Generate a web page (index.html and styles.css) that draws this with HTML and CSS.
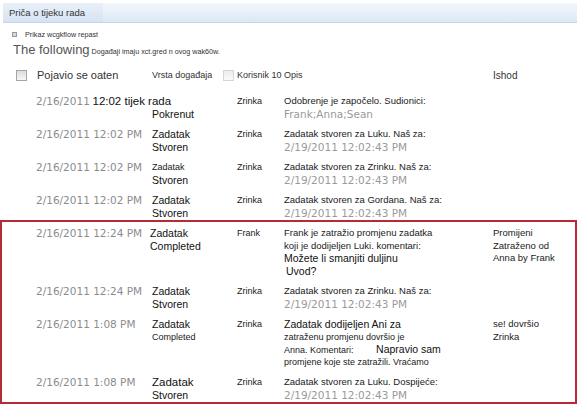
FILE: index.html
```html
<!DOCTYPE html>
<html>
<head>
    <meta charset="utf-8">
    <title>Priča o tijeku rada</title>
    <link rel="stylesheet" href="styles.css">
</head>
<body>
<div class="titlebar"><span class="tab">Priča o tijeku rada</span></div>
<div class="subline"><span class="bullet"></span>Prikaz wcgkflow repast</div>
<div class="intro"><span class="big">The following</span> Događaji imaju xct.gred n ovog wak60w.</div>

<div class="row head">
    <div><span class="check"></span></div>
    <div class="h-date">Pojavio se oaten</div>
    <div class="h-type">Vrsta događaja <span class="check light"></span></div>
    <div>Korisnik 10</div>
    <div>Opis</div>
    <div class="h-out">Ishod</div>
</div>

<div class="row">
    <div class="cell"><div><span class="dt">2/16/2011</span> <span class="xl">12:02 tijek rada</span></div></div>
    <div class="cell"><div></div><div class="lg">Pokrenut</div></div>
    <div class="cell user"><div>Zrinka</div></div>
    <div class="cell"><div>Odobrenje je započelo. Sudionici:</div><div class="dg">Frank;Anna;Sean</div></div>
    <div class="cell"></div>
</div>
<div class="row">
    <div class="cell"><div class="dt">2/16/2011 12:02 PM</div></div>
    <div class="cell"><div class="lg">Zadatak</div><div class="lg">Stvoren</div></div>
    <div class="cell user"><div>Zrinka</div></div>
    <div class="cell"><div>Zadatak stvoren za Luku. Naš za:</div><div class="dg">2/19/2011 12:02:43 PM</div></div>
    <div class="cell"></div>
</div>
<div class="row">
    <div class="cell"><div class="dt">2/16/2011 12:02 PM</div></div>
    <div class="cell"><div class="sm">Zadatak</div><div class="lg">Stvoren</div></div>
    <div class="cell user"><div>Zrinka</div></div>
    <div class="cell"><div>Zadatak stvoren za Zrinku. Naš za:</div><div class="dg">2/19/2011 12:02:43 PM</div></div>
    <div class="cell"></div>
</div>
<div class="row">
    <div class="cell"><div class="dt">2/16/2011 12:02 PM</div></div>
    <div class="cell"><div class="lg">Zadatak</div><div class="lg">Stvoren</div></div>
    <div class="cell user"><div>Zrinka</div></div>
    <div class="cell"><div>Zadatak stvoren za Gordana. Naš za:</div><div class="dg">2/19/2011 12:02:43 PM</div></div>
    <div class="cell"></div>
</div>

<div class="flagged">
    <div class="row">
        <div class="cell"><div class="dt">2/16/2011 12:24 PM</div></div>
        <div class="cell shift"><div class="lg">Zadatak</div><div class="lg">Completed</div></div>
        <div class="cell user"><div>Frank</div></div>
        <div class="cell">
            <div>Frank je zatražio promjenu zadatka</div>
            <div>koji je dodijeljen Luki. komentari:</div>
            <div class="lg">Možete li smanjiti duljinu</div>
            <div class="lg indent">Uvod?</div>
        </div>
        <div class="cell"><div>Promijeni</div><div>Zatraženo od</div><div>Anna by Frank</div></div>
    </div>
    <div class="row">
        <div class="cell"><div class="dt">2/16/2011 12:24 PM</div></div>
        <div class="cell"><div class="lg">Zadatak</div><div class="lg">Stvoren</div></div>
        <div class="cell user"><div>Zrinka</div></div>
        <div class="cell"><div>Zadatak stvoren za Zrinku. Naš za:</div><div class="dg">2/19/2011 12:02:43 PM</div></div>
        <div class="cell"></div>
    </div>
    <div class="row">
        <div class="cell"><div class="dt">2/16/2011 1:08 PM</div></div>
        <div class="cell"><div class="lg">Zadatak</div><div class="sm">Completed</div></div>
        <div class="cell user"><div>Zrinka</div></div>
        <div class="cell">
            <div class="lg">Zadatak dodijeljen Ani za</div>
            <div class="sm">zatraženu promjenu dovršio je</div>
            <div class="sm">Anna. Komentari: <span class="lg gap">Napravio sam</span></div>
            <div class="sm">promjene koje ste zatražili. Vraćamo</div>
        </div>
        <div class="cell"><div>se! dovršio</div><div>Zrinka</div></div>
    </div>
    <div class="row last">
        <div class="cell"><div class="dt">2/16/2011 1:08 PM</div></div>
        <div class="cell"><div class="xl">Zadatak</div><div class="lg">Stvoren</div></div>
        <div class="cell user"><div>Zrinka</div></div>
        <div class="cell"><div>Zadatak stvoren za Luku. Dospijeće:</div><div class="dg">2/19/2011 12:02:43 PM</div></div>
        <div class="cell"></div>
    </div>
</div>
</body>
</html>
```

FILE: styles.css
```css
body {
    margin: 0;
    font-family: "Liberation Sans", Arial, sans-serif;
    color: #1a1a1a;
    background-color: #fff;
}
.titlebar {
    display: flex;
    height: 19px;
    margin: 3px 0 0 3px;
    background: linear-gradient(#f3f7fc, #dce8f6);
    border-bottom: 1px solid #c6d6ea;
}
.tab {
    display: flex;
    align-items: center;
    padding: 0 18px 0 6px;
    font-size: 9.5px;
    color: #333;
    background: linear-gradient(#e9f0f9, #d6e3f3);
}
.subline {
    display: flex;
    align-items: center;
    height: 10px;
    margin: 6px 0 0 12px;
    font-size: 7.2px;
    color: #333;
}
.bullet {
    width: 3px;
    height: 3px;
    margin-right: 8px;
    border: 1px solid #9a9a9a;
    background-color: #d8d8d8;
}
.intro {
    height: 15px;
    line-height: 15px;
    margin: 3px 0 0 13px;
    font-size: 7.2px;
    color: #333;
}
.intro .big {
    font-size: 13px;
    color: #555;
}
.row {
    display: grid;
    grid-template-columns: 116px 85px 47px 209px 1fr;
    padding: 5px 0 3px 36px;
}
.head {
    grid-template-columns: 20px 116px 85px 47px 209px 1fr;
    align-items: center;
    height: 16px;
    margin-top: 10px;
    padding: 0 0 0 16px;
    font-size: 9px;
    color: #333;
}
.h-date {
    padding-left: 1px;
    font-size: 11px;
}
.h-type {
    display: flex;
    align-items: center;
    justify-content: space-between;
    padding-right: 3px;
}
.h-out {
    font-size: 10px;
}
.check {
    display: block;
    width: 9px;
    height: 9px;
    border: 1px solid #a6a6a6;
    background: linear-gradient(#dcdcdc, #f6f6f6);
}
.check.light {
    border-color: #d6d6d6;
    background: linear-gradient(#ececec, #fafafa);
}
.head + .row {
    margin-top: 7px;
}
.cell {
    font-size: 9.5px;
}
.cell > div {
    height: 12.5px;
    line-height: 12.5px;
    white-space: nowrap;
}
.user {
    font-size: 9px;
}
.shift {
    margin-left: -2px;
}
.dt {
    font-family: "DejaVu Sans", Verdana, sans-serif;
    font-size: 10.5px;
    color: #8c8c8c;
}
.dg {
    font-family: "DejaVu Sans", Verdana, sans-serif;
    font-size: 10.5px;
    color: #9a9a9a;
}
.lg {
    font-size: 10.5px;
    color: #111;
}
.xl {
    font-size: 11.5px;
    color: #111;
}
.sm {
    font-size: 9px;
}
.indent {
    padding-left: 2px;
}
.gap {
    margin-left: 20px;
}
.flagged {
    margin-top: -2px;
    border: 2px solid #b52b33;
}
.flagged .row {
    padding-left: 34px;
}
.flagged .row.last {
    padding-bottom: 1px;
}
```
